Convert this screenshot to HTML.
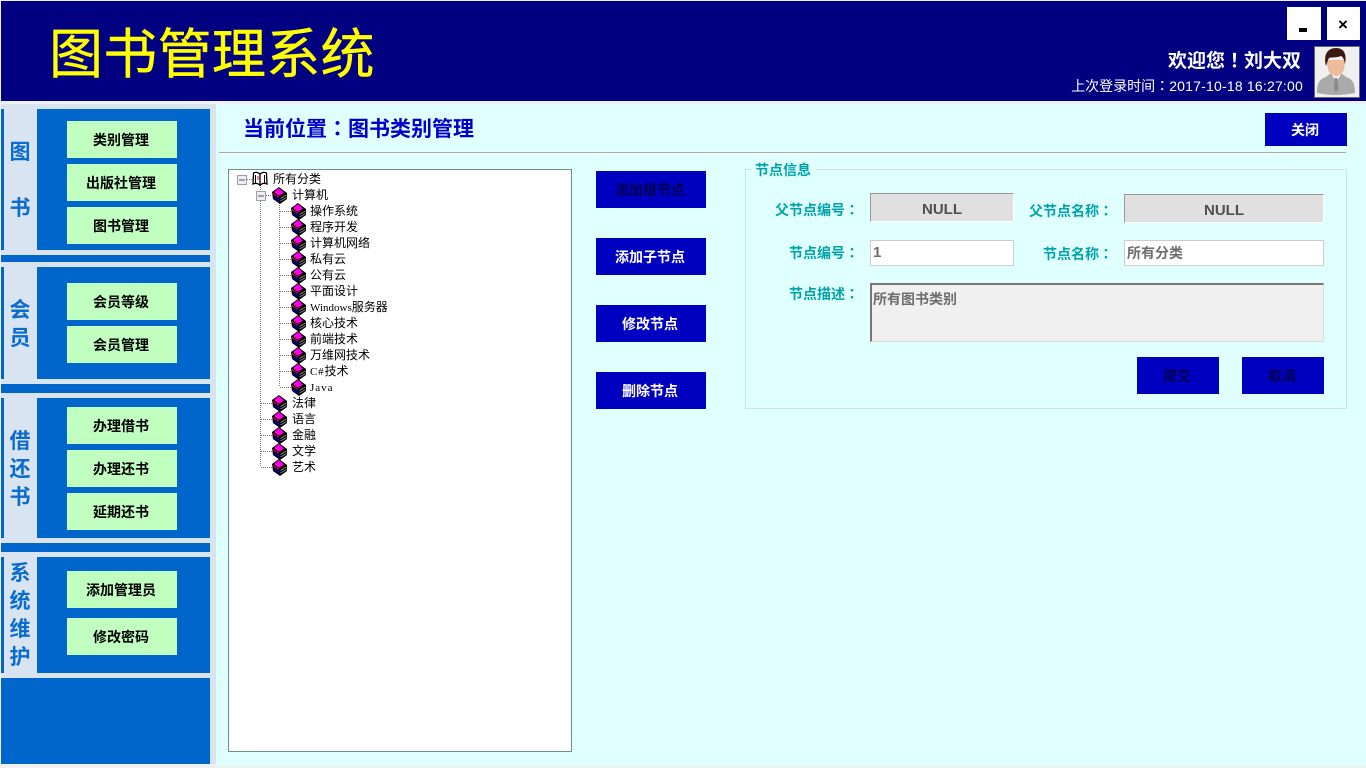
<!DOCTYPE html>
<html lang="zh-CN">
<head>
<meta charset="utf-8">
<title>图书管理系统</title>
<style>
html,body{margin:0;padding:0;width:1366px;height:768px;overflow:hidden;background:#f0f0f0}
body{position:relative;font-family:"Liberation Sans","Noto Sans CJK SC",sans-serif}
div,span{position:absolute;box-sizing:border-box;white-space:nowrap}
.c{text-align:center}
.q{font-family:"Noto Sans CJK TC",sans-serif;font-style:normal}
.g{left:67px;width:110px;height:37px;line-height:38px;padding-right:2px;background:#c0ffc0;color:#000;font-weight:bold;font-size:14px;text-align:center}
.p{left:37px;width:173px;background:#0066cc}
.st{left:1px;width:3px;background:#0066cc}
.sep{left:1px;width:209px;background:#0066cc}
.lab{left:9px;width:22px;height:28px;line-height:28px;text-align:center;font-size:21px;font-weight:bold;color:#0a6ccf}
.b{background:#0000c0;color:#fff;font-weight:bold;font-size:14px;text-align:center;line-height:38px;padding-right:2px}
.a{left:596px;width:110px;height:37px}
.t{color:#00a4a8;font-weight:bold;font-size:14px;line-height:20px;text-align:right;width:110px}
.v{color:#6e6e6e;font-weight:bold;font-size:14px}
.r{font-family:"WenQuanYi Zen Hei","Noto Sans CJK SC",sans-serif;font-size:12px;line-height:16px;height:16px;color:#000}
.r i{font-style:normal;font-family:"Liberation Serif",serif;font-size:11px}
svg{position:absolute;display:block;overflow:visible}
</style>
</head>
<body>
<svg width="0" height="0" style="left:0;top:0">
<defs>
<symbol id="bk" viewBox="0 0 16 17">
<path d="M0 5 7 0l8 6v6l-7 5-7-5z" fill="#000"/>
<path d="M2 5 7 1l5 4.500L7 9z" fill="#ff00e6"/>
<path d="M2 8 7 11v5L3 12z" fill="#000080"/>
<path d="M1 6.500 7 10.500" stroke="#e01030" stroke-width="1" fill="none"/>
<path d="M8.500 11.500 14.500 8M8.500 14 14.500 10.500" stroke="#8a8a8a" stroke-width="1" fill="none"/>
</symbol>
<symbol id="op" viewBox="0 0 16 16">
<path d="M8 3C6 1 3 1 1.500 2L1 13c2.500-1 5-1 7 1.500 2-2.500 4.500-2.500 7-1.500L14.500 2C13 1 10 1 8 3z" fill="#fff" stroke="#000" stroke-width="1.300"/>
<path d="M8 3v11" stroke="#000" stroke-width="1.300"/>
<path d="M3.500 4v8M12.500 4v8" stroke="#000" stroke-width="1"/>
<path d="M6 5v4" stroke="#e01030"/>
</symbol>
<symbol id="mi" viewBox="0 0 10 10">
<rect x=".5" y=".5" width="9" height="9" fill="#eceef2" stroke="#9a9eac"/>
<path d="M2 5h6" stroke="#555"/>
</symbol>
</defs>
</svg>

<!-- Header -->
<div style="left:1px;top:1px;width:1365px;height:100px;background:#000080"></div>
<div style="left:49px;top:16px;height:78px;line-height:78px;font-size:54px;letter-spacing:.3px;color:#ff0;-webkit-text-stroke:.4px #ff0">图书管理系统</div>
<div style="left:1287px;top:7px;width:34px;height:33px;background:#fff"></div>
<div style="left:1299px;top:28px;width:8px;height:4px;background:#000"></div>
<div class="c" style="left:1327px;top:7px;width:33px;height:33px;padding-right:1px;background:#fff;line-height:35px;font-size:17px;font-weight:bold;color:#000">×</div>
<div style="right:65px;top:46px;height:28px;line-height:28px;color:#fff;font-weight:bold;font-size:19px">欢迎您<i class="q" lang="zh-TW">！</i>刘大双</div>
<div style="right:63px;top:76px;height:20px;line-height:20px;color:#fff;font-size:14px">上次登录时间<i class="q" lang="zh-TW">：</i><b style="font-weight:normal;letter-spacing:.2px">2017-10-18 16:27:00</b></div>
<svg style="left:1314px;top:46px" width="46" height="52" viewBox="0 0 46 52">
<rect x=".5" y=".5" width="45" height="51" fill="#f0f0f0" stroke="#666"/>
<path d="M3 47C3 36 6 33 12 31l5-4h10l5 4c6 2 9 5 9 16Q22 51 3 47z" fill="#aaa"/>
<path d="M13 14c0 12 4 16 9 17 5-1 9-5 9-17z" fill="#edbd9b"/>
<path d="M18 28l4 9 5-9-5 3z" fill="#fff"/>
<path d="M20.500 32h3l1 11-2.500 3-2-3z" fill="#8a8a8a"/>
<path d="M12 20C9 8 14 2 22 2s11 6 9 16c-1-5-2-7-4-8-5 2-10 1-12 2-1 2-2 5-3 8z" fill="#3a1a12"/>
</svg>

<!-- Sidebar -->
<div style="left:1px;top:104px;width:215px;height:660px;background:#d8e4f2"></div>

<div class="st" style="top:109px;height:141px"></div>
<div class="p" style="top:109px;height:141px"></div>
<div class="lab" style="top:139px">图</div>
<div class="lab" style="top:195px">书</div>
<div class="g" style="top:121px">类别管理</div>
<div class="g" style="top:164px">出版社管理</div>
<div class="g" style="top:207px">图书管理</div>

<div class="sep" style="top:255px;height:7px"></div>

<div class="st" style="top:267px;height:112px"></div>
<div class="p" style="top:267px;height:112px"></div>
<div class="lab" style="top:297px">会</div>
<div class="lab" style="top:325px">员</div>
<div class="g" style="top:283px">会员等级</div>
<div class="g" style="top:326px">会员管理</div>

<div class="sep" style="top:384px;height:9px"></div>

<div class="st" style="top:398px;height:140px"></div>
<div class="p" style="top:398px;height:140px"></div>
<div class="lab" style="top:428px">借</div>
<div class="lab" style="top:456px">还</div>
<div class="lab" style="top:484px">书</div>
<div class="g" style="top:407px">办理借书</div>
<div class="g" style="top:450px">办理还书</div>
<div class="g" style="top:493px">延期还书</div>

<div class="sep" style="top:543px;height:9px"></div>

<div class="st" style="top:557px;height:116px"></div>
<div class="p" style="top:557px;height:116px"></div>
<div class="lab" style="top:560px">系</div>
<div class="lab" style="top:588px">统</div>
<div class="lab" style="top:616px">维</div>
<div class="lab" style="top:644px">护</div>
<div class="g" style="top:571px">添加管理员</div>
<div class="g" style="top:618px">修改密码</div>

<div class="sep" style="top:678px;height:86px"></div>

<!-- Content -->
<div style="left:216px;top:104px;width:1150px;height:662px;background:#e0ffff"></div>
<div style="left:243px;top:112px;height:32px;line-height:32px;font-size:21px;font-weight:bold;color:#0000cc">当前位置<i class="q" lang="zh-TW">：</i>图书类别管理</div>
<div class="b" style="left:1265px;top:113px;width:82px;height:33px;line-height:35px">关闭</div>
<div style="left:219px;top:152px;width:1127px;height:2px;background:#a8a8a8;border-bottom:1px solid #f4ffff"></div>

<!-- Tree -->
<div style="left:228px;top:169px;width:344px;height:583px;background:#fff;border:1px solid #6f8f8f"></div>
<svg style="left:0;top:0" width="1366" height="768">
<g stroke="#777" stroke-width="1" stroke-dasharray="1 1" fill="none" shape-rendering="crispEdges">
<path d="M260.500 187V467M279.500 203V387"/>
<path d="M247 179.500h5M266 195.500h6"/>
<path d="M280 211.500h11M280 227.500h11M280 243.500h11M280 259.500h11M280 275.500h11M280 291.500h11M280 307.500h11M280 323.500h11M280 339.500h11M280 355.500h11M280 371.500h11M280 387.500h11"/>
<path d="M261 403.500h11M261 419.500h11M261 435.500h11M261 451.500h11M261 467.500h11"/>
</g>
<use href="#mi" x="237" y="175" width="10" height="10"/>
<use href="#mi" x="256" y="191" width="10" height="10"/>
<use href="#op" x="252" y="171" width="16" height="16"/>
<use href="#bk" x="272" y="187" width="16" height="17"/>
<use href="#bk" x="291" y="203" width="16" height="17"/>
<use href="#bk" x="291" y="219" width="16" height="17"/>
<use href="#bk" x="291" y="235" width="16" height="17"/>
<use href="#bk" x="291" y="251" width="16" height="17"/>
<use href="#bk" x="291" y="267" width="16" height="17"/>
<use href="#bk" x="291" y="283" width="16" height="17"/>
<use href="#bk" x="291" y="299" width="16" height="17"/>
<use href="#bk" x="291" y="315" width="16" height="17"/>
<use href="#bk" x="291" y="331" width="16" height="17"/>
<use href="#bk" x="291" y="347" width="16" height="17"/>
<use href="#bk" x="291" y="363" width="16" height="17"/>
<use href="#bk" x="291" y="379" width="16" height="17"/>
<use href="#bk" x="272" y="395" width="16" height="17"/>
<use href="#bk" x="272" y="411" width="16" height="17"/>
<use href="#bk" x="272" y="427" width="16" height="17"/>
<use href="#bk" x="272" y="443" width="16" height="17"/>
<use href="#bk" x="272" y="459" width="16" height="17"/>
</svg>
<div class="r" style="left:273px;top:171px">所有分类</div>
<div class="r" style="left:292px;top:187px">计算机</div>
<div class="r" style="left:310px;top:203px">操作系统</div>
<div class="r" style="left:310px;top:219px">程序开发</div>
<div class="r" style="left:310px;top:235px">计算机网络</div>
<div class="r" style="left:310px;top:251px">私有云</div>
<div class="r" style="left:310px;top:267px">公有云</div>
<div class="r" style="left:310px;top:283px">平面设计</div>
<div class="r" style="left:310px;top:299px"><i>Windows</i>服务器</div>
<div class="r" style="left:310px;top:315px">核心技术</div>
<div class="r" style="left:310px;top:331px">前端技术</div>
<div class="r" style="left:310px;top:347px">万维网技术</div>
<div class="r" style="left:310px;top:363px"><i style="letter-spacing:.8px">C#</i>技术</div>
<div class="r" style="left:310px;top:379px"><i style="letter-spacing:1px">Java</i></div>
<div class="r" style="left:292px;top:395px">法律</div>
<div class="r" style="left:292px;top:411px">语言</div>
<div class="r" style="left:292px;top:427px">金融</div>
<div class="r" style="left:292px;top:443px">文学</div>
<div class="r" style="left:292px;top:459px">艺术</div>

<!-- Actions -->
<div class="b a" style="top:171px;color:#000050">添加根节点</div>
<div class="b a" style="top:238px">添加子节点</div>
<div class="b a" style="top:305px">修改节点</div>
<div class="b a" style="top:372px">删除节点</div>

<!-- Fieldset -->
<div style="left:745px;top:169px;width:602px;height:240px;border:1px solid #d4e0e0"></div>
<div style="left:751px;top:161px;width:64px;height:18px;line-height:18px;text-align:center;background:#e0ffff;color:#00a4a8;font-weight:bold;font-size:14px">节点信息</div>

<div class="t" style="left:749px;top:200px">父节点编号<i class="q" lang="zh-TW">：</i></div>
<div class="t" style="left:1003px;top:201px">父节点名称<i class="q" lang="zh-TW">：</i></div>
<div class="t" style="left:749px;top:243px">节点编号<i class="q" lang="zh-TW">：</i></div>
<div class="t" style="left:1003px;top:244px">节点名称<i class="q" lang="zh-TW">：</i></div>
<div class="t" style="left:749px;top:284px">节点描述<i class="q" lang="zh-TW">：</i></div>

<div class="c" style="left:870px;top:193px;width:144px;height:29px;background:#e0e0e0;border:1px solid #fff;border-top-color:#999;border-left-color:#999;line-height:31px;font-size:15px;font-weight:bold;color:#505050">NULL</div>
<div class="c" style="left:1124px;top:194px;width:200px;height:29px;background:#e0e0e0;border:1px solid #fff;border-top-color:#999;border-left-color:#999;line-height:31px;font-size:15px;font-weight:bold;color:#505050">NULL</div>

<div class="v" style="left:870px;top:240px;width:144px;height:26px;background:#fff;border:1px solid #ccc;line-height:24px;padding-left:2px;font-size:15px">1</div>
<div class="v" style="left:1124px;top:240px;width:200px;height:26px;background:#fff;border:1px solid #ccc;line-height:24px;padding-left:2px">所有分类</div>
<div class="v" style="left:870px;top:283px;width:454px;height:59px;background:#f0f0f0;border:2px solid #ddd;border-top-color:#777;border-left-color:#777;border-right-width:1px;border-bottom-width:1px;line-height:28px;padding-left:1px">所有图书类别</div>

<div class="b" style="left:1137px;top:357px;width:82px;height:37px;color:#000050">提交</div>
<div class="b" style="left:1242px;top:357px;width:82px;height:37px;color:#000050">取消</div>
</body>
</html>
